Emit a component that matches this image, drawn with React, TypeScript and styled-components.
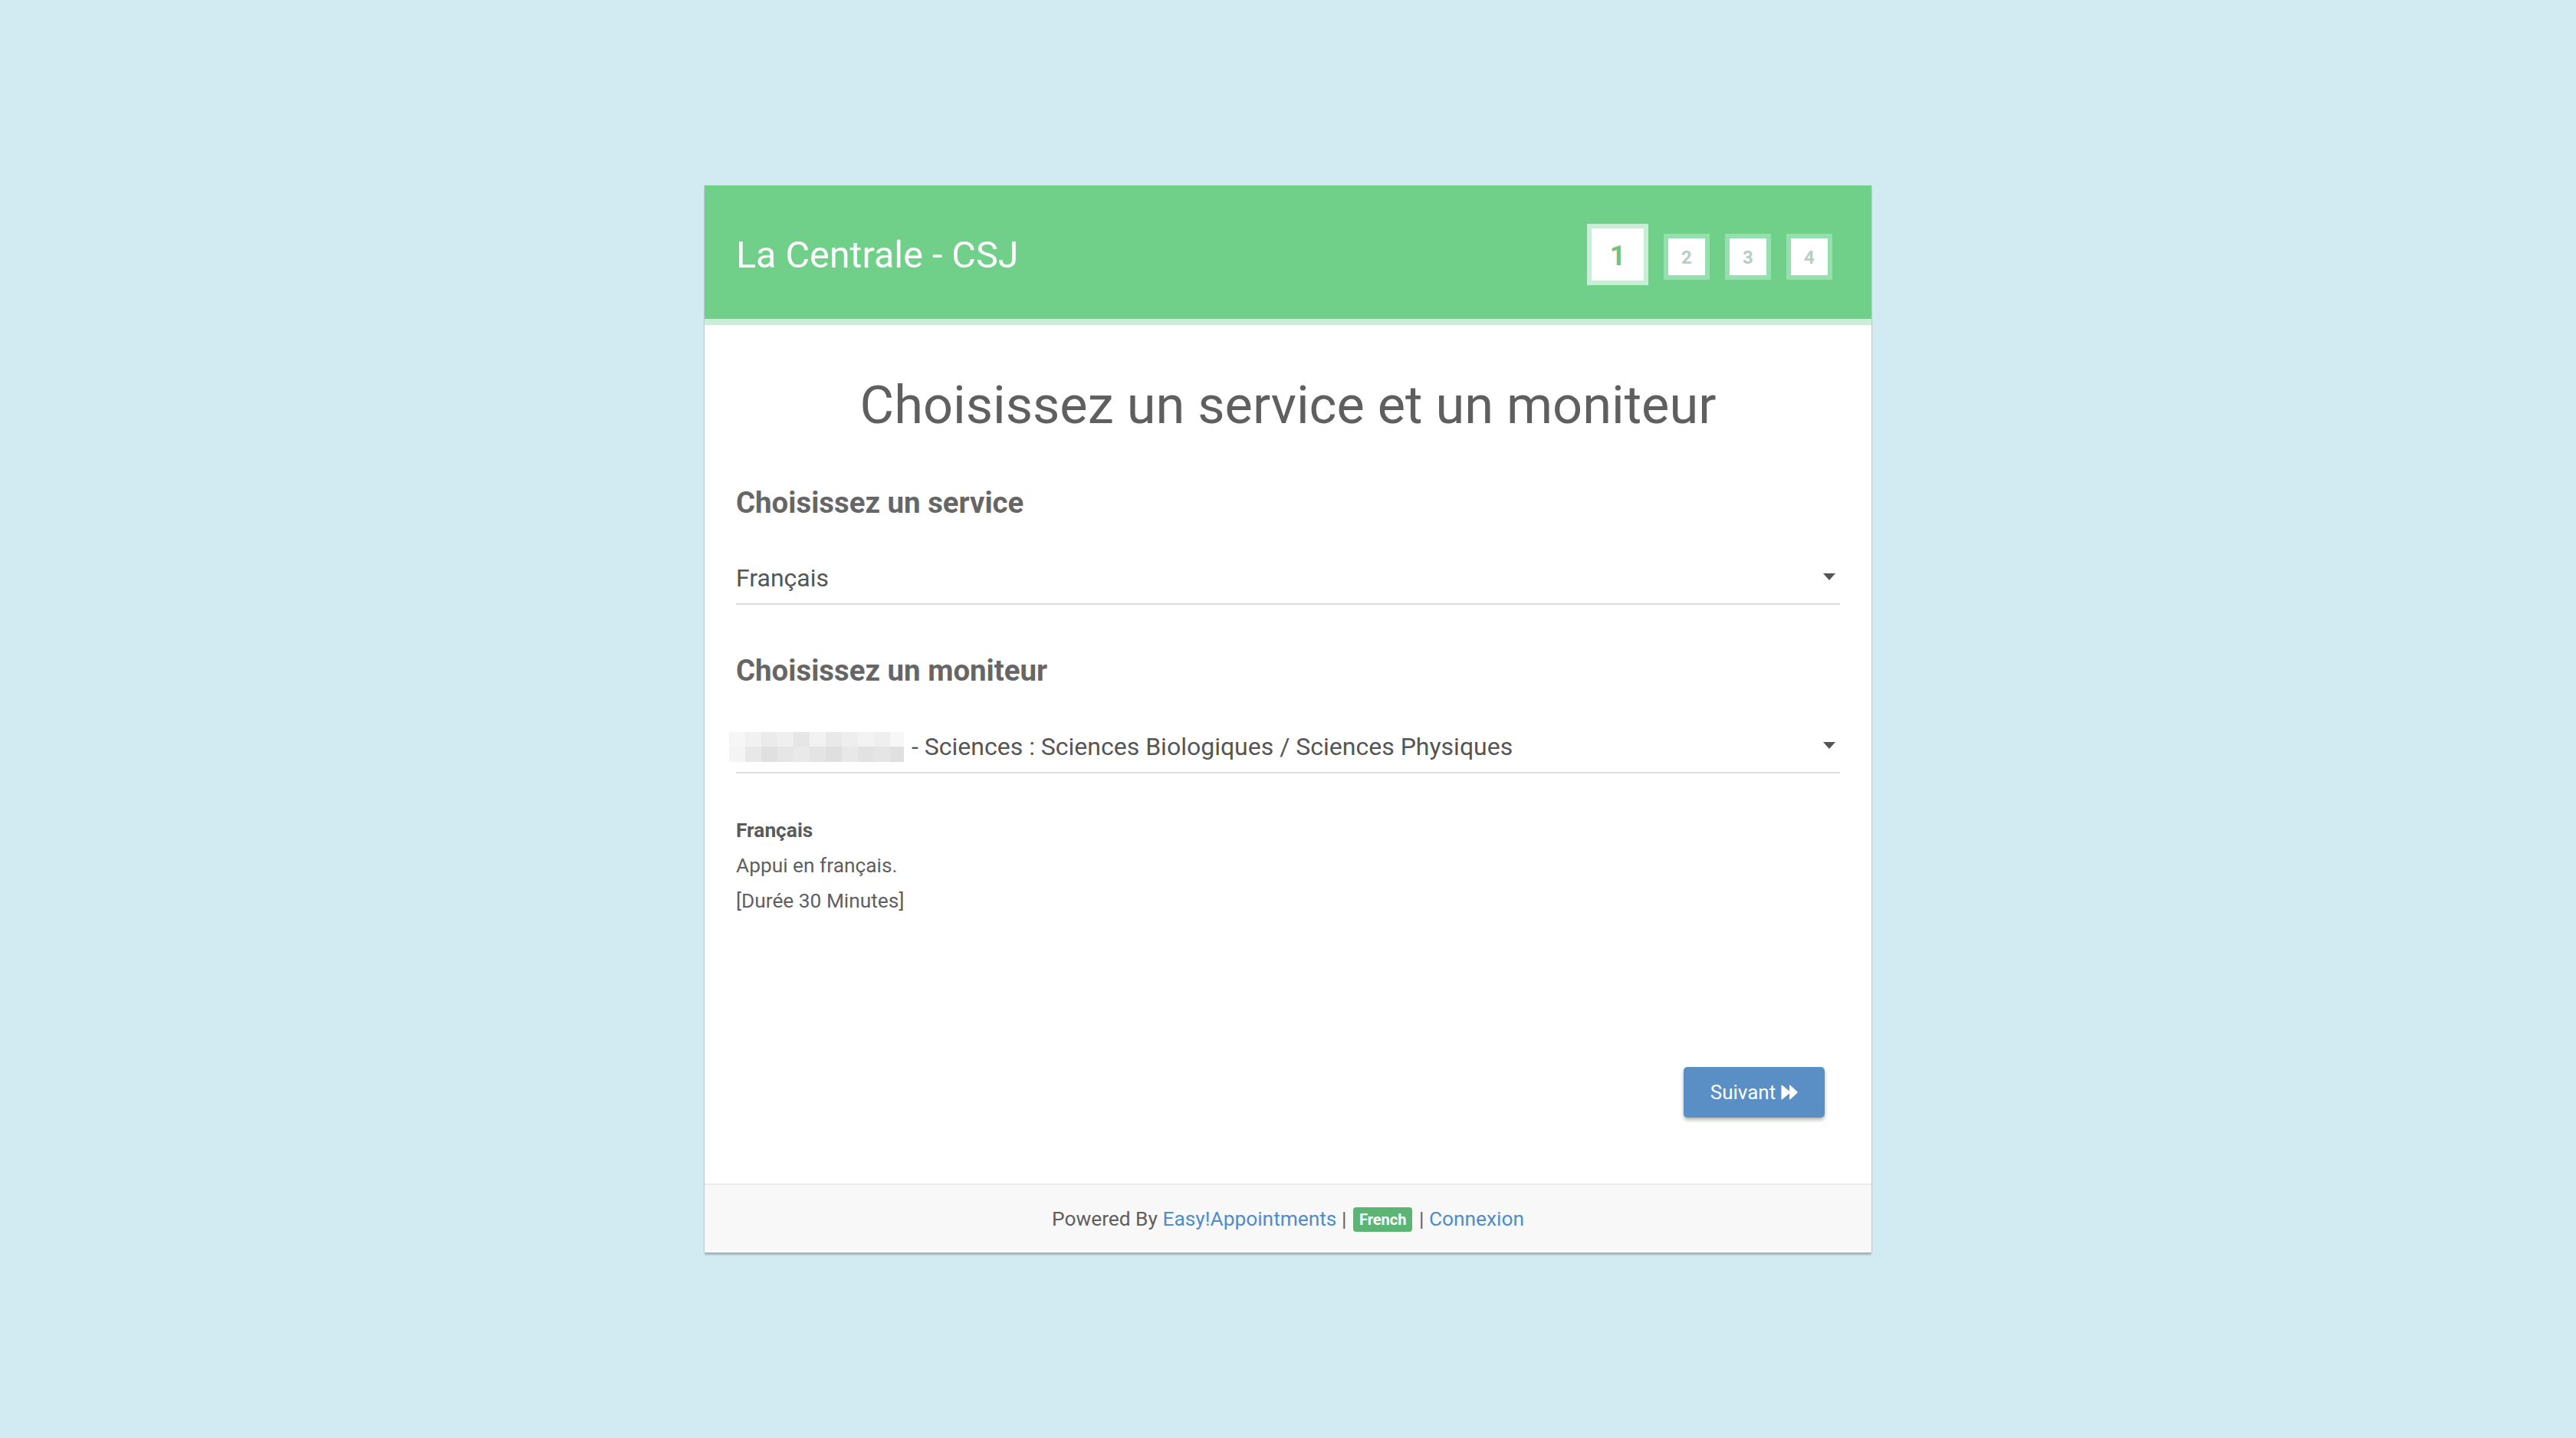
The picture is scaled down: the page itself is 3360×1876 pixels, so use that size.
import React from "react";
import styled, { createGlobalStyle } from "styled-components";

const GlobalStyle = createGlobalStyle`
  html, body {
    margin: 0;
    padding: 0;
    background: #d2eaf1;
    min-height: 100vh;
    font-family: "Roboto", "Liberation Sans", Arial, sans-serif;
  }
  #root {
    min-height: 100vh;
    overflow: hidden;
  }
`;

const Card = styled.div`
  width: 1522px;
  margin: 242px auto 0;
  background: #ffffff;
  box-shadow: 0 0 1px rgba(0, 0, 0, 0.25), 0 3px 2px rgba(0, 0, 0, 0.22);
`;

const Header = styled.header`
  background: #70d08a;
  border-bottom: 8px solid #c8eed8;
  display: flex;
  align-items: center;
  justify-content: space-between;
  padding: 6px 51px 0 41px;
  box-sizing: content-box;
  height: 168px;
`;

const Company = styled.div`
  color: #ffffff;
  font-size: 48.5px;
  font-weight: 400;
`;

const Steps = styled.div`
  display: flex;
  align-items: center;
  gap: 20px;
`;

const Step = styled.div<{ $active?: boolean }>`
  box-sizing: border-box;
  width: ${(p) => (p.$active ? 80 : 60)}px;
  height: ${(p) => (p.$active ? 80 : 60)}px;
  margin-top: ${(p) => (p.$active ? 0 : 5)}px;
  border: 6px solid ${(p) => (p.$active ? "#c8eed8" : "#95e0ae")};
  background: #ffffff;
  display: flex;
  align-items: center;
  justify-content: center;
  padding-top: ${(p) => (p.$active ? 4 : 2)}px;
  font-weight: 700;
  font-size: ${(p) => (p.$active ? 36 : 24)}px;
  color: ${(p) => (p.$active ? "#6cc585" : "#b4cfc1")};
`;

const Content = styled.main`
  padding: 64px 41px 0;
`;

const FrameTitle = styled.h1`
  margin: 0;
  text-align: center;
  font-size: 68.5px;
  line-height: 82px;
  font-weight: 400;
  color: #5f5f5f;
`;

const SectionTitle = styled.h2<{ $top: number }>`
  margin: ${(p) => p.$top}px 0 0;
  font-size: 38.4px;
  line-height: 44px;
  font-weight: 700;
  color: #666666;
`;

const SelectBox = styled.div<{ $top: number }>`
  margin-top: ${(p) => p.$top}px;
  height: 66px;
  border-bottom: 2px solid #dddddd;
  display: flex;
  align-items: center;
  justify-content: space-between;
  padding-right: 6px;
`;

const SelectValue = styled.div`
  display: flex;
  align-items: center;
  font-size: 32px;
  color: #555555;
  white-space: nowrap;
`;

const Caret = styled.span`
  width: 0;
  height: 0;
  border-left: 8px solid transparent;
  border-right: 8px solid transparent;
  border-top: 9px solid #555555;
  margin-top: -4px;
`;

const Mosaic = styled.span`
  display: inline-grid;
  grid-template-columns: repeat(11, 21px);
  grid-template-rows: 19px 20px;
  width: 228px;
  margin-left: -9px;
  margin-right: 10px;
  overflow: hidden;
`;

const Cell = styled.span<{ $tone: string }>`
  background: ${(p) => p.$tone};
`;

const Description = styled.div`
  margin-top: 51px;
  font-size: 26.3px;
  line-height: 46px;
  color: #606060;
`;

const DescTitle = styled.div`
  font-weight: 700;
  color: #5a5a5a;
`;

const Actions = styled.div`
  display: flex;
  justify-content: flex-end;
  padding: 194px 20px 86px 0;
`;

const NextButton = styled.button`
  height: 66px;
  width: 184px;
  border: none;
  border-radius: 5px;
  background: #5a8fc6;
  color: #ffffff;
  font-family: inherit;
  font-size: 26px;
  display: flex;
  align-items: center;
  justify-content: center;
  gap: 7px;
  box-shadow: 0 3px 5px rgba(0, 0, 0, 0.3);
  cursor: pointer;
`;

const Footer = styled.footer`
  border-top: 2px solid #ececec;
  background: #f8f8f8;
  padding: 24px 0;
  text-align: center;
  font-size: 26.3px;
  line-height: 40px;
  color: #5f5f5f;
`;

const Link = styled.a`
  color: #4f8cca;
  text-decoration: none;
`;

const Badge = styled.span`
  display: inline-block;
  background: #5cb574;
  color: #ffffff;
  font-weight: 700;
  font-size: 20px;
  line-height: 20px;
  padding: 6px 8px;
  border-radius: 4px;
  vertical-align: 1px;
  margin: 0 2px;
`;

const mosaicTones = [
  "#f6f6f6", "#f1f1f1", "#ebebeb", "#efefef", "#e6e6e6", "#f2f2f2", "#e9e9e9", "#eeeeee", "#f3f3f3", "#efefef", "#f7f7f7",
  "#f4f4f4", "#e8e8e8", "#e0e0e0", "#e6e6e6", "#e9e9e9", "#e4e4e4", "#dfdfdf", "#e8e8e8", "#e2e2e2", "#e5e5e5", "#e0e0e0",
];

const ForwardIcon = () => (
  <svg width="22" height="20" viewBox="0 0 22 20" aria-hidden="true">
    <path d="M0.5 1.2 Q0.5 0 1.6 0.7 L11 8.4 L11 1.2 Q11 0 12.1 0.7 L21.2 9 Q22 10 21.2 11 L12.1 19.3 Q11 20 11 18.8 L11 11.6 L1.6 19.3 Q0.5 20 0.5 18.8 Z" fill="#ffffff" />
  </svg>
);

export default function App() {
  return (
    <>
      <GlobalStyle />
      <Card>
        <Header>
          <Company>La Centrale - CSJ</Company>
          <Steps>
            <Step $active>1</Step>
            <Step>2</Step>
            <Step>3</Step>
            <Step>4</Step>
          </Steps>
        </Header>
        <Content>
          <FrameTitle>Choisissez un service et un moniteur</FrameTitle>
          <SectionTitle $top={64}>Choisissez un service</SectionTitle>
          <SelectBox $top={43}>
            <SelectValue>Français</SelectValue>
            <Caret />
          </SelectBox>
          <SectionTitle $top={64}>Choisissez un moniteur</SectionTitle>
          <SelectBox $top={44}>
            <SelectValue>
              <Mosaic>
                {mosaicTones.map((t, i) => (
                  <Cell key={i} $tone={t} />
                ))}
              </Mosaic>
              - Sciences : Sciences Biologiques / Sciences Physiques
            </SelectValue>
            <Caret />
          </SelectBox>
          <Description>
            <DescTitle>Français</DescTitle>
            <div>Appui en français.</div>
            <div>[Durée 30 Minutes]</div>
          </Description>
          <Actions>
            <NextButton>
              Suivant
              <ForwardIcon />
            </NextButton>
          </Actions>
        </Content>
        <Footer>
          Powered By <Link href="#">Easy!Appointments</Link> | <Badge>French</Badge> |{" "}
          <Link href="#">Connexion</Link>
        </Footer>
      </Card>
    </>
  );
}
